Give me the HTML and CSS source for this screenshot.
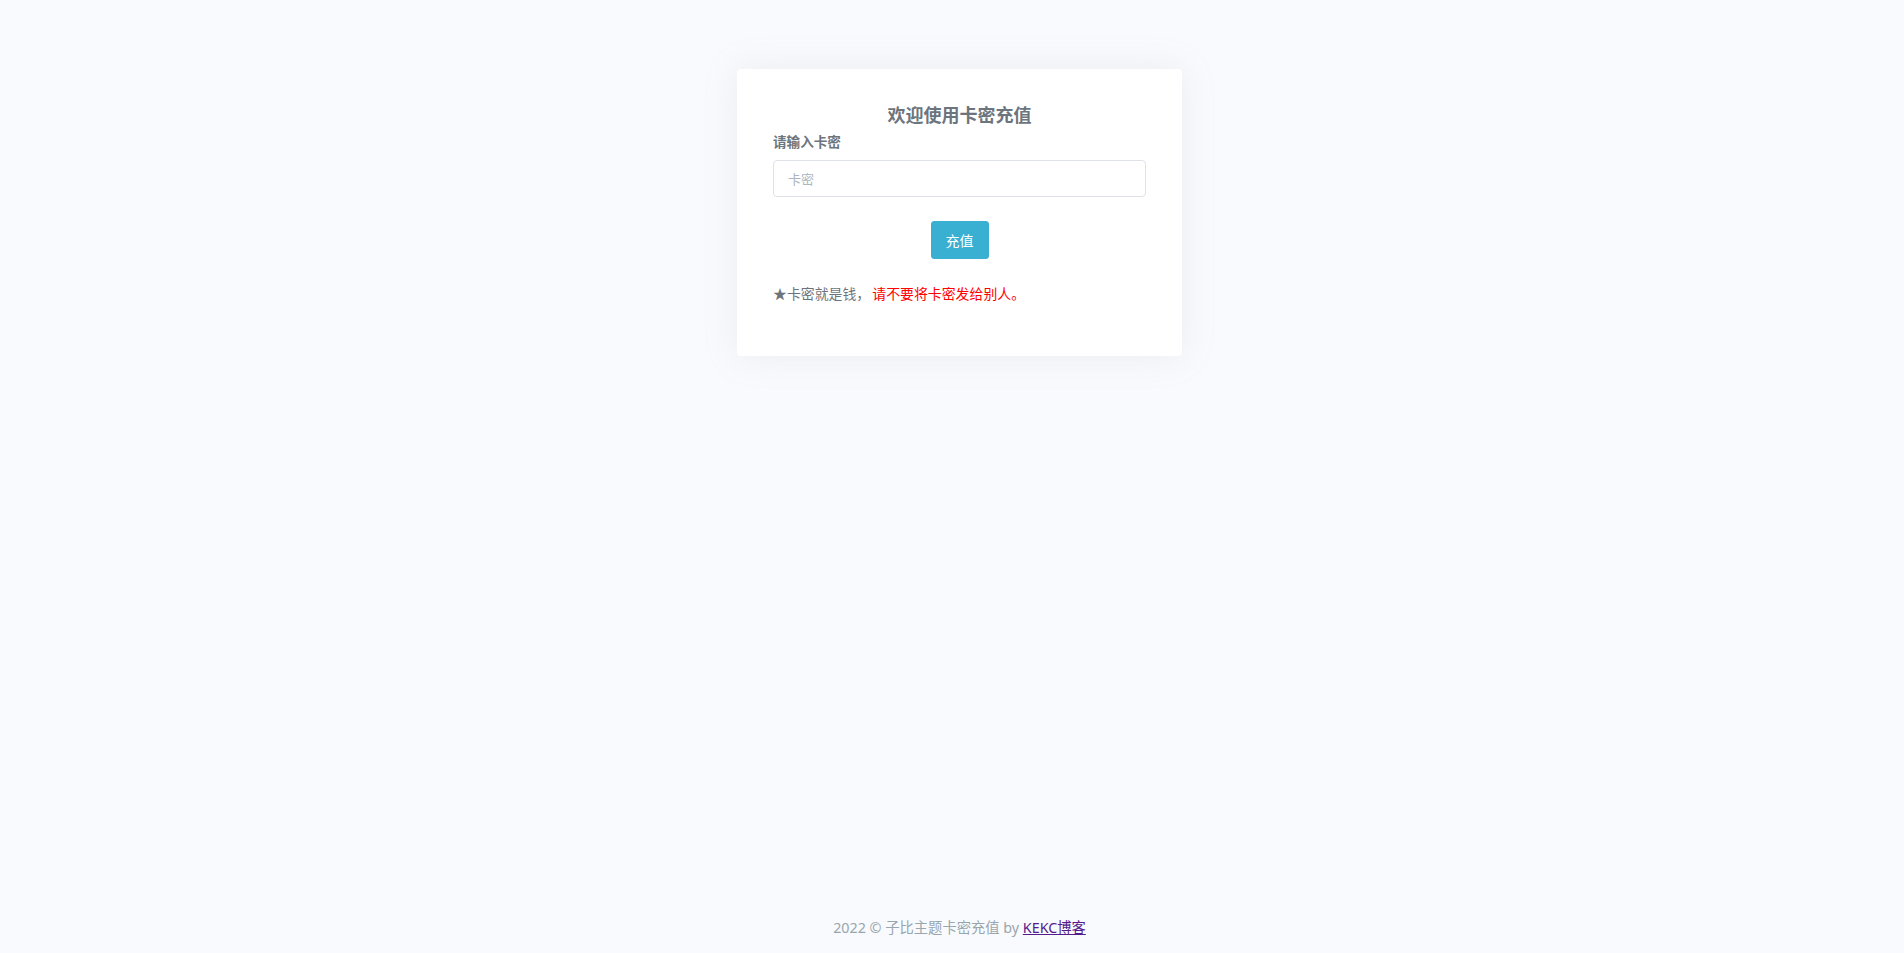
FILE: index.html
```html
<!DOCTYPE html>
<html lang="zh-CN">
<head>
<meta charset="utf-8">
<title>卡密充值</title>
<link rel="stylesheet" href="styles.css">
</head>
<body>
<div class="page">
  <main class="main">
    <div class="card">
      <h4 class="title">欢迎使用卡密充值</h4>
      <label class="label" for="km">请输入卡密</label>
      <input class="input" id="km" type="text" placeholder="卡密">
      <div class="actions">
        <button class="btn" type="button">充值</button>
      </div>
      <p class="notice">★卡密就是钱，<span class="warn">请不要将卡密发给别人。</span></p>
    </div>
  </main>
  <footer class="footer">2022 © 子比主题卡密充值 by <a class="link" href="#">KEKC博客</a></footer>
</div>
</body>
</html>
```
FILE: styles.css
```css
html, body {
  margin: 0;
  padding: 0;
  height: 100%;
}
body {
  background: #f9fafd;
  font-family: "Noto Sans", "Noto Sans CJK SC", sans-serif;
  color: #6c757d;
}
.page {
  min-height: 100vh;
  display: flex;
  flex-direction: column;
  padding-left: 15px;
  box-sizing: border-box;
}
.main {
  display: flex;
  justify-content: center;
  padding-top: 69px;
}
.card {
  width: 445px;
  box-sizing: border-box;
  background: #fff;
  border-radius: 4px;
  box-shadow: 0 0 35px 0 rgba(154, 161, 171, 0.15);
  padding: 34px 36px 36px;
  display: flex;
  flex-direction: column;
}
.title {
  margin: 0 0 7px;
  text-align: center;
  font-size: 18px;
  line-height: 22px;
  font-weight: 700;
  color: #6c757d;
  font-family: "Noto Sans CJK SC", sans-serif;
}
.label {
  font-size: 13.6px;
  line-height: 18px;
  font-weight: 700;
  color: #6c757d;
  margin-bottom: 10px;
  font-family: "Noto Sans CJK SC", sans-serif;
}
.input {
  height: 37px;
  box-sizing: border-box;
  border: 1px solid #dee2e6;
  border-radius: 4px;
  padding: 0 14px;
  font-size: 13px;
  color: #6c757d;
  font-family: "Noto Sans CJK SC", sans-serif;
  outline: none;
}
.input::placeholder {
  color: #adb5bd;
}
.actions {
  display: flex;
  justify-content: center;
  margin-top: 24px;
}
.btn {
  width: 58px;
  height: 38px;
  background: #39afd1;
  border: 1px solid #39afd1;
  border-radius: 3px;
  color: #fff;
  font-size: 14px;
  font-family: "Noto Sans CJK SC", sans-serif;
  padding: 0;
  cursor: pointer;
}
.notice {
  margin: 24px 0 17px;
  font-size: 13.9px;
  line-height: 20px;
  color: #6c757d;
  font-family: "Noto Sans CJK SC", sans-serif;
}
.warn {
  color: #ff0000;
  margin-left: 2px;
}
.footer {
  margin-top: auto;
  text-align: center;
  font-size: 14.3px;
  line-height: 20px;
  padding: 0 0 15px;
  color: #98a6ad;
  font-family: "Noto Sans", "Noto Sans CJK SC", sans-serif;
}
.link {
  color: #551a8b;
  text-decoration: underline;
}
```
